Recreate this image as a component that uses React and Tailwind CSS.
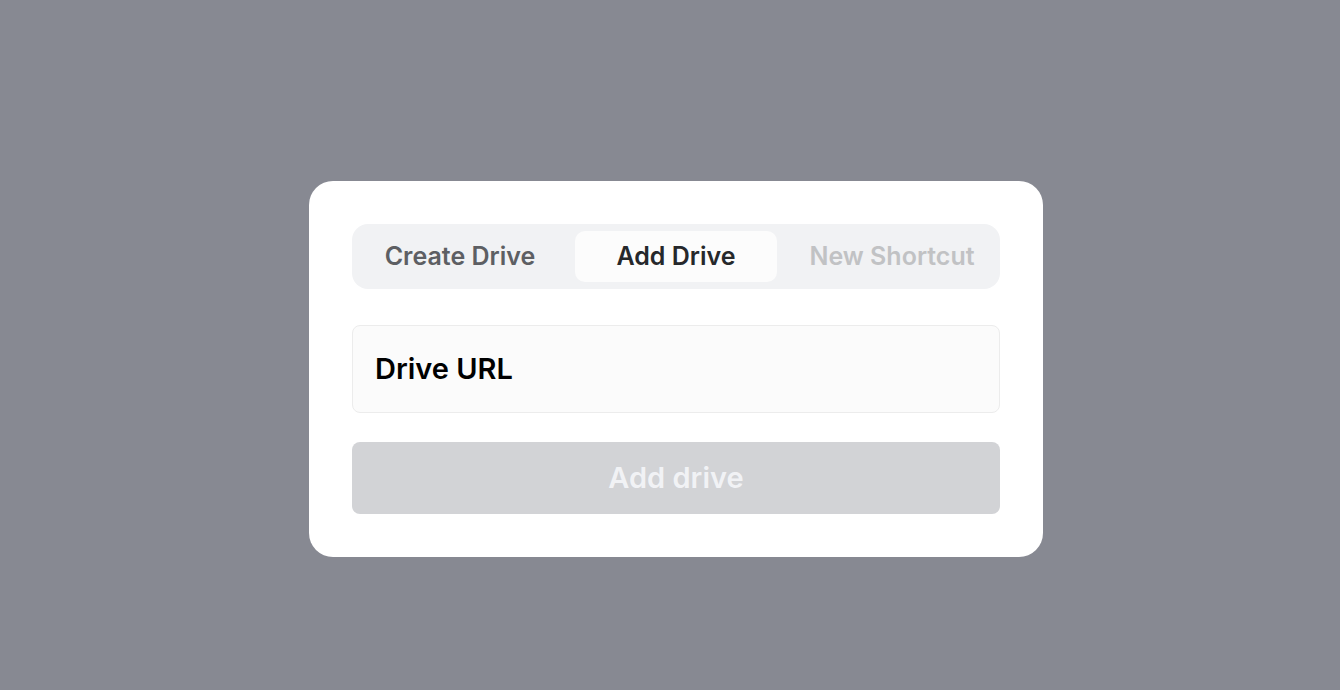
export default function App() {
  const tabs = [
    { label: "Create Drive", state: "idle" },
    { label: "Add Drive", state: "active" },
    { label: "New Shortcut", state: "disabled" },
  ];
  return (
    <div
      className="h-[690px] w-full bg-[#878992] pt-[181px] pl-[309px]"
      style={{ fontFamily: "Inter, 'Noto Sans', sans-serif" }}
    >
      <div className="w-[734px] rounded-[24px] bg-white p-[43px] flex flex-col">
        <div className="flex gap-[14px] rounded-[16px] bg-[#f1f2f4] p-[7px]">
          {tabs.map((t) => (
            <div
              key={t.label}
              className={
                "flex-1 h-[51px] flex items-center justify-center rounded-[10px] text-[25px] font-semibold " +
                (t.state === "active"
                  ? "bg-[#fcfcfc] text-[#26282b]"
                  : t.state === "disabled"
                  ? "text-[#c1c2c4]"
                  : "text-[#5d5f63]")
              }
            >
              {t.label}
            </div>
          ))}
        </div>
        <div className="mt-[36px] h-[88px] rounded-[8px] border border-[#ececec] bg-[#fbfbfb] flex items-center px-[22px]">
          <span className="text-[29px] font-semibold text-black">Drive URL</span>
        </div>
        <button className="mt-[29px] h-[72px] rounded-[8px] bg-[#d2d3d6] text-[29px] font-semibold text-[#f1f2f5]">
          Add drive
        </button>
      </div>
    </div>
  );
}
